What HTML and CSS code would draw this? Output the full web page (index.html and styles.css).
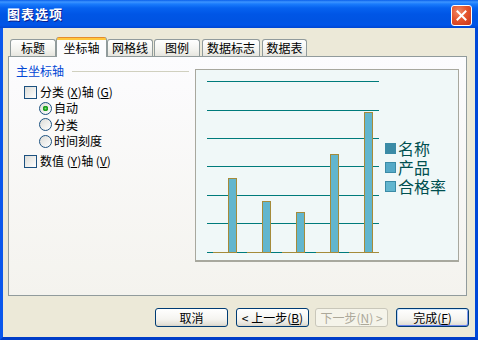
FILE: index.html
```html
<!DOCTYPE html>
<html lang="zh-CN">
<head>
<meta charset="utf-8">
<title>图表选项</title>
<link rel="stylesheet" href="styles.css">
</head>
<body>
<div class="window">
  <div class="titlebar">
    <span class="title">图表选项</span>
    <span class="close"><svg width="13" height="13" viewBox="0 0 13 13"><path d="M2.5 2.5 L10.5 10.5 M10.5 2.5 L2.5 10.5" stroke="#fff" stroke-width="2" stroke-linecap="square"/></svg></span>
  </div>
  <div class="client">
    <div class="tabs">
      <div class="tab w-title">标题</div>
      <div class="tab active">坐标轴</div>
      <div class="tab w-grid">网格线</div>
      <div class="tab w-legend">图例</div>
      <div class="tab w-labels">数据标志</div>
      <div class="tab w-table">数据表</div>
    </div>
    <div class="panel">
      <div class="options">
        <div class="group-head"><span class="group-title">主坐标轴</span><span class="group-line"></span></div>
        <div class="row check-row first"><span class="checkbox"></span>分类 (<u>X</u>)轴 (<u>G</u>)</div>
        <div class="row radio-row"><span class="radio on"></span>自动</div>
        <div class="row radio-row mid"><span class="radio"></span>分类</div>
        <div class="row radio-row"><span class="radio"></span>时间刻度</div>
        <div class="row check-row last"><span class="checkbox"></span>数值 (<u>Y</u>)轴 (<u>V</u>)</div>
      </div>
      <div class="preview">
        <svg class="chart" width="262" height="190" viewBox="0 0 262 190">
          <g stroke="#007b7b" stroke-width="1">
            <line x1="11" y1="11.5" x2="183" y2="11.5"/>
            <line x1="11" y1="40.5" x2="183" y2="40.5"/>
            <line x1="11" y1="68.5" x2="183" y2="68.5"/>
            <line x1="11" y1="96.5" x2="183" y2="96.5"/>
            <line x1="11" y1="125.5" x2="183" y2="125.5"/>
            <line x1="11" y1="153.5" x2="183" y2="153.5"/>
            <line x1="11" y1="182.5" x2="183" y2="182.5"/>
          </g>
          <g stroke="#a58b3a" stroke-width="1">
            <line x1="17" y1="182.5" x2="41" y2="182.5"/>
            <line x1="51" y1="182.5" x2="75" y2="182.5"/>
            <line x1="86" y1="182.5" x2="109" y2="182.5"/>
            <line x1="120" y1="182.5" x2="143" y2="182.5"/>
            <line x1="153" y1="182.5" x2="183" y2="182.5"/>
          </g>
          <g fill="#62b6ce" stroke="#a58b3a" stroke-width="1">
            <rect x="32.5" y="108.5" width="8" height="74"/>
            <rect x="66.5" y="131.5" width="8" height="51"/>
            <rect x="100.5" y="142.5" width="8" height="40"/>
            <rect x="134.5" y="84.5" width="8" height="98"/>
            <rect x="168.5" y="42.5" width="8" height="140"/>
          </g>
        </svg>
        <div class="legend">
          <div class="legend-item"><span class="swatch s1"></span>名称</div>
          <div class="legend-item"><span class="swatch s2"></span>产品</div>
          <div class="legend-item"><span class="swatch s3"></span>合格率</div>
        </div>
      </div>
    </div>
    <div class="buttons">
      <button class="btn">取消</button>
      <button class="btn back">&lt; 上一步(<u>B</u>)</button>
      <button class="btn next" disabled>下一步(<u>N</u>) &gt;</button>
      <button class="btn default">完成(<u>F</u>)</button>
    </div>
  </div>
</div>
</body>
</html>
```

FILE: styles.css
```css
html, body {
  margin: 0;
  padding: 0;
}

body {
  width: 478px;
  height: 340px;
  overflow: hidden;
  font-family: "Noto Sans CJK SC", "Noto Sans", sans-serif;
  font-size: 12px;
  color: #000;
  background: #ece9d8;
}

.window {
  width: 478px;
  height: 340px;
  display: flex;
  flex-direction: column;
}

.titlebar {
  height: 28px;
  flex: none;
  display: flex;
  justify-content: space-between;
  align-items: flex-start;
  padding: 0 6px 0 7px;
  background: linear-gradient(#0a5fea 0, #3d95ff 2px, #1a7cfc 4px, #0662ef 8px, #0056e6 14px, #0054e3 20px, #0054e8 25px, #0046d2 28px);
}

.title {
  margin-top: 6px;
  color: #fff;
  font-weight: bold;
  font-size: 13px;
  line-height: 16px;
  letter-spacing: 1px;
  text-shadow: 1px 1px 0 #0a1e8c;
}

.close {
  margin-top: 5px;
  width: 19px;
  height: 19px;
  border: 1px solid #fff;
  border-radius: 3px;
  background: radial-gradient(circle at 35% 30%, #f08a68 0, #e5552d 45%, #c8331a 100%);
  display: flex;
  align-items: center;
  justify-content: center;
}

.client {
  flex: 1;
  display: flex;
  flex-direction: column;
  background: #ece9d8;
  border-left: 3px solid #0a57ec;
  border-right: 3px solid #0048d8;
  border-bottom: 3px solid #003dc8;
  padding: 9px 8px 0 5px;
}

/* tabs */
.tabs {
  height: 19px;
  display: flex;
  align-items: flex-end;
  padding-left: 2px;
  position: relative;
  z-index: 1;
}

.tab {
  box-sizing: border-box;
  height: 17px;
  border: 1px solid #919b9c;
  border-bottom: none;
  border-radius: 3px 3px 0 0;
  background: linear-gradient(#ffffff, #f3f3ef 60%, #e6e5df);
  text-align: center;
  line-height: 16px;
}

.w-title { width: 46px; }
.w-grid { width: 46px; }
.w-legend { width: 46px; margin-left: 1px; }
.w-labels { width: 58px; margin-left: 2px; }
.w-table { width: 45px; margin-left: 2px; }

.tab.active {
  width: 51px;
  height: 20px;
  margin-bottom: -1px;
  border-top: none;
  background: linear-gradient(#e68b2c 0, #e68b2c 1px, #ffc73c 1px, #ffc73c 3px, #fcfcfe 3px);
  line-height: 21px;
}

/* panel */
.panel {
  box-sizing: border-box;
  width: 459px;
  height: 240px;
  border: 1px solid #919b9c;
  background: linear-gradient(#fcfcfe, #f4f3ee);
  display: flex;
  padding: 7px 7px 0 7px;
  gap: 6px;
}

.options {
  width: 173px;
  flex: none;
  display: flex;
  flex-direction: column;
}

.group-head {
  height: 14px;
  display: flex;
  align-items: center;
}

.group-title {
  color: #0046d5;
  line-height: 14px;
}

.group-line {
  flex: 1;
  height: 1px;
  margin-left: 8px;
  background: #d0d0bf;
}

.row {
  height: 16px;
  display: flex;
  align-items: center;
  line-height: 16px;
  white-space: nowrap;
}

.row u {
  text-decoration: underline;
}

.check-row.first { margin-top: 6px; }
.check-row.last { margin-top: 4px; }
.radio-row.mid { height: 17px; }

.checkbox {
  box-sizing: border-box;
  width: 13px;
  height: 13px;
  margin-left: 8px;
  margin-right: 3px;
  border: 1px solid #1c5180;
  background: linear-gradient(135deg, #dcdcd7, #ffffff);
}

.radio {
  box-sizing: border-box;
  width: 13px;
  height: 13px;
  margin-left: 23px;
  margin-right: 2px;
  border: 1px solid #1c5180;
  border-radius: 50%;
  background: linear-gradient(135deg, #dcdcd7, #ffffff);
}

.radio.on {
  background: radial-gradient(circle at 50% 50%, #7ee27a 0, #21a121 1.5px, #1e9a1e 2.6px, rgba(0,0,0,0) 3px), linear-gradient(135deg, #dcdcd7, #ffffff);
}

/* chart preview */
.preview {
  box-sizing: border-box;
  position: relative;
  width: 264px;
  height: 193px;
  margin-top: 5px;
  border: 1px solid #a8a89e;
  border-bottom-width: 2px;
  background: #f0f8f8;
}

.chart {
  display: block;
}

.legend {
  position: absolute;
  left: 189px;
  top: 69px;
  display: flex;
  flex-direction: column;
  font-size: 16px;
  color: #005050;
}

.legend-item {
  height: 19px;
  line-height: 19px;
  display: flex;
  align-items: center;
  white-space: nowrap;
}

.swatch {
  box-sizing: border-box;
  width: 11px;
  height: 11px;
  margin-right: 2px;
  border: 1px solid #3b8ba6;
}

.s1 { background: #3b8ba6; }
.s2 { background: #55a9c7; }
.s3 { background: #62b6cf; }

/* buttons */
.buttons {
  display: flex;
  justify-content: flex-end;
  margin-top: 12px;
  margin-right: -2px;
}

.btn {
  box-sizing: border-box;
  width: 73px;
  height: 19px;
  padding: 0;
  border: 1px solid #003c74;
  border-radius: 3px;
  background: linear-gradient(#ffffff, #f5f4f0 60%, #e3e1d8 90%, #d6d0c5);
  font-family: "Noto Sans CJK SC", "Noto Sans", sans-serif;
  font-size: 12px;
  line-height: 17px;
  color: #000;
}

.btn.back { margin-left: 8px; }
.btn.next { margin-left: 6px; }
.btn.default {
  margin-left: 8px;
  box-shadow: inset 0 1px 0 #cee7ff, inset 0 -1px 0 #6982ee, inset 1px 0 0 #b8d3f9, inset -1px 0 0 #7f97ef;
}

.btn:disabled {
  border-color: #c9c7ba;
  background: #f5f4ea;
  color: #aca899;
}
```
